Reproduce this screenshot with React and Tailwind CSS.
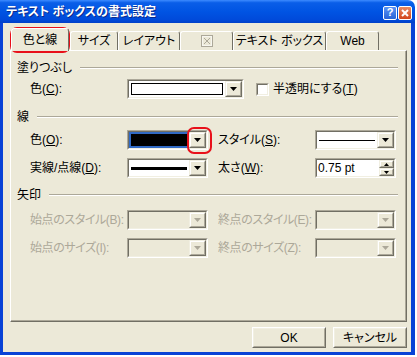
import React from "react";

function Arrow({ disabled }) {
  return (
    <svg width="7" height="4" viewBox="0 0 7 4">
      <path d="M0 0h7L3.5 4z" fill={disabled ? "#aca899" : "#000"} />
    </svg>
  );
}

function DropButton({ disabled }) {
  return (
    <div className="w-[17px] h-full border border-t-[#f1efe2] border-l-[#f1efe2] border-r-[#716f64] border-b-[#716f64] bg-[#ece9d8]">
      <div className="h-full flex items-center justify-center border border-t-white border-l-white border-r-[#aca899] border-b-[#aca899]">
        <Arrow disabled={disabled} />
      </div>
    </div>
  );
}

function Sunken({ className, children }) {
  return (
    <div className={"border border-t-[#aca899] border-l-[#aca899] border-r-white border-b-white " + className}>
      <div className="h-full flex border border-t-[#716f64] border-l-[#716f64] border-r-[#f1efe2] border-b-[#f1efe2]">
        {children}
      </div>
    </div>
  );
}

function GroupHeader({ children }) {
  return (
    <div className="flex items-center h-[14px] pl-[6px] pr-[7px]">
      <span className="text-[12px] leading-none">{children}</span>
      <div className="flex-1 ml-[8px] border-t border-t-[#aca899] border-b border-b-white" />
    </div>
  );
}

function Label({ children, disabled }) {
  return (
    <div className={"w-[97px] shrink-0 whitespace-nowrap text-[12px] leading-none " + (disabled ? "text-[#aca899] tracking-[-0.4px]" : "text-black")}>
      {children}
    </div>
  );
}

function DisabledSelect() {
  return (
    <Sunken className="w-[81px] h-[20px]">
      <div className="flex-1 bg-[#ece9d8]" />
      <DropButton disabled />
    </Sunken>
  );
}

function SpinButton({ up }) {
  return (
    <div className="flex-1 border border-t-[#f1efe2] border-l-[#f1efe2] border-r-[#716f64] border-b-[#716f64] bg-[#ece9d8]">
      <div className="h-full flex items-center justify-center border border-t-white border-l-white border-r-[#aca899] border-b-[#aca899]">
        <svg width="5" height="3" viewBox="0 0 5 3">
          <path d={up ? "M0 3h5L2.5 0z" : "M0 0h5L2.5 3z"} fill="#000" />
        </svg>
      </div>
    </div>
  );
}

function PushButton({ children }) {
  return (
    <div className="w-[74px] h-[21px] border border-t-white border-l-white border-r-[#716f64] border-b-[#716f64] bg-[#ece9d8]">
      <div className="h-full flex items-center justify-center border border-t-[#f1efe2] border-l-[#f1efe2] border-r-[#aca899] border-b-[#aca899] text-[12px] leading-none">
        {children}
      </div>
    </div>
  );
}

function Tab({ children, active, width }) {
  if (active) {
    return (
      <div className={"relative z-10 -mb-px h-[23px] flex items-center justify-center rounded-t-[3px] border-t border-l border-white border-r border-r-[#716f64] bg-[#ece9d8] text-[12px] leading-none " + width}>
        {children}
      </div>
    );
  }
  return (
    <div className={"h-[19px] flex items-center justify-center rounded-t-[3px] border-t border-l border-white border-r border-r-[#716f64] bg-[#ece9d8] text-[12px] leading-none " + width}>
      {children}
    </div>
  );
}

export default function App() {
  return (
    <div className="w-[417px] h-[357px] bg-white overflow-hidden relative font-['Liberation_Sans','Noto_Sans_CJK_JP',sans-serif] [font-feature-settings:'palt'] text-black">
      <div className="w-[415px] h-[355px] flex flex-col">
        {/* title bar */}
        <div className="h-[23px] flex items-center rounded-tr-[7px] bg-[linear-gradient(to_bottom,#3d8bff_0%,#0a5ee8_12%,#0054e3_50%,#004ada_85%,#0040c8_100%)] pl-[6px] pr-[3px]">
          <span className="flex-1 text-white font-bold text-[12px] leading-none [text-shadow:1px_1px_#0a2a8c]">
            テキスト ボックスの書式設定
          </span>
          <div className="w-[14px] h-[14px] mt-[2px] rounded-[2px] border border-white bg-[linear-gradient(to_bottom,#5b93f5,#2763d8)] flex items-center justify-center text-white font-bold text-[11px] leading-none">
            ?
          </div>
          <div className="w-[14px] h-[14px] mt-[2px] ml-[1px] rounded-[2px] border border-white bg-[linear-gradient(to_bottom,#e98a63,#d2451c)] flex items-center justify-center">
            <svg width="8" height="8" viewBox="0 0 8 8">
              <path d="M1 1L7 7M7 1L1 7" stroke="#fff" strokeWidth="2" />
            </svg>
          </div>
        </div>

        {/* client */}
        <div className="flex-1 flex flex-col bg-[#ece9d8] border-l-[3px] border-r-[4px] border-b-[3px] border-[#0842d6] pl-[7px] pr-[4px]">
          {/* tabs */}
          <div className="mt-[5px] h-[22px] flex items-end pl-[1px]">
            <Tab active width="w-[58px]">色と線</Tab>
            <Tab width="w-[48px] ml-[1px]">サイズ</Tab>
            <Tab width="w-[62px]">レイアウト</Tab>
            <Tab width="w-[53px]">
              <svg width="12" height="12" viewBox="0 0 12 12">
                <rect x="0.5" y="0.5" width="11" height="11" fill="none" stroke="#aca899" />
                <path d="M3 3L9 9M9 3L3 9" stroke="#aca899" />
                <rect x="1.5" y="1.5" width="9" height="9" fill="none" stroke="#fff" strokeOpacity="0.6" />
              </svg>
            </Tab>
            <Tab width="w-[93px]">テキスト ボックス</Tab>
            <Tab width="w-[53px]">Web</Tab>
          </div>

          {/* panel */}
          <div className="h-[272px] flex flex-col border border-t-white border-l-white border-r-[#716f64] border-b-[#716f64]">
            <div className="h-full flex flex-col border-r border-b border-r-[#aca899] border-b-[#aca899]">
              <div className="mt-[10px]">
                <GroupHeader>塗りつぶし</GroupHeader>
              </div>
              <div className="mt-[4px] h-[20px] flex items-center pl-[19px]">
                <Label>色(<u>C</u>):</Label>
                <Sunken className="w-[117px] h-[20px]">
                  <div className="flex-1 bg-white p-[2px]">
                    <div className="h-full border border-black bg-white" />
                  </div>
                  <DropButton />
                </Sunken>
                <div className="ml-[12px] w-[13px] h-[13px] border border-t-[#aca899] border-l-[#aca899] border-r-white border-b-white">
                  <div className="h-full border border-t-[#716f64] border-l-[#716f64] border-r-[#f1efe2] border-b-[#f1efe2] bg-white" />
                </div>
                <span className="ml-[4px] text-[12px] leading-none">半透明にする(<u>T</u>)</span>
              </div>

              <div className="mt-[11px]">
                <GroupHeader>線</GroupHeader>
              </div>
              <div className="mt-[6px] h-[20px] flex items-center pl-[19px]">
                <Label>色(<u>O</u>):</Label>
                <Sunken className="w-[81px] h-[20px]">
                  <div className="flex-1 bg-[#316ac5] p-[2px]">
                    <div className="h-full bg-black" />
                  </div>
                  <DropButton />
                </Sunken>
                <div className="ml-[10px]">
                  <Label>スタイル(<u>S</u>):</Label>
                </div>
                <Sunken className="w-[81px] h-[20px]">
                  <div className="flex-1 bg-white flex items-center px-[2px]">
                    <div className="flex-1 h-px bg-black" />
                  </div>
                  <DropButton />
                </Sunken>
              </div>
              <div className="mt-[8px] h-[20px] flex items-center pl-[19px]">
                <Label>実線/点線(<u>D</u>):</Label>
                <Sunken className="w-[81px] h-[20px]">
                  <div className="flex-1 bg-white flex items-center px-[2px]">
                    <div className="flex-1 h-[3px] bg-black" />
                  </div>
                  <DropButton />
                </Sunken>
                <div className="ml-[10px]">
                  <Label>太さ(<u>W</u>):</Label>
                </div>
                <Sunken className="w-[81px] h-[20px]">
                  <div className="flex-1 bg-white flex items-center pl-[1px] text-[12px] leading-none">0.75 pt</div>
                  <div className="w-[15px] flex flex-col bg-white">
                    <SpinButton up />
                    <SpinButton />
                  </div>
                </Sunken>
              </div>

              <div className="mt-[10px]">
                <GroupHeader>矢印</GroupHeader>
              </div>
              <div className="mt-[8px] h-[20px] flex items-center pl-[19px]">
                <Label disabled>始点のスタイル(B):</Label>
                <DisabledSelect />
                <div className="ml-[10px]">
                  <Label disabled>終点のスタイル(E):</Label>
                </div>
                <DisabledSelect />
              </div>
              <div className="mt-[8px] h-[20px] flex items-center pl-[19px]">
                <Label disabled>始点のサイズ(I):</Label>
                <DisabledSelect />
                <div className="ml-[10px]">
                  <Label disabled>終点のサイズ(Z):</Label>
                </div>
                <DisabledSelect />
              </div>
            </div>
          </div>

          {/* buttons */}
          <div className="mt-[5px] flex justify-end gap-[7px]">
            <PushButton>OK</PushButton>
            <PushButton>キャンセル</PushButton>
          </div>
        </div>
      </div>

      {/* highlight marks */}
      <div className="absolute left-[10px] top-[27px] w-[60px] h-[26px] rounded-[7px] border-2 border-[#e8101a]" />
      <div className="absolute left-[187px] top-[127px] w-[25px] h-[27px] rounded-[7px] border-2 border-[#e8101a]" />
    </div>
  );
}
